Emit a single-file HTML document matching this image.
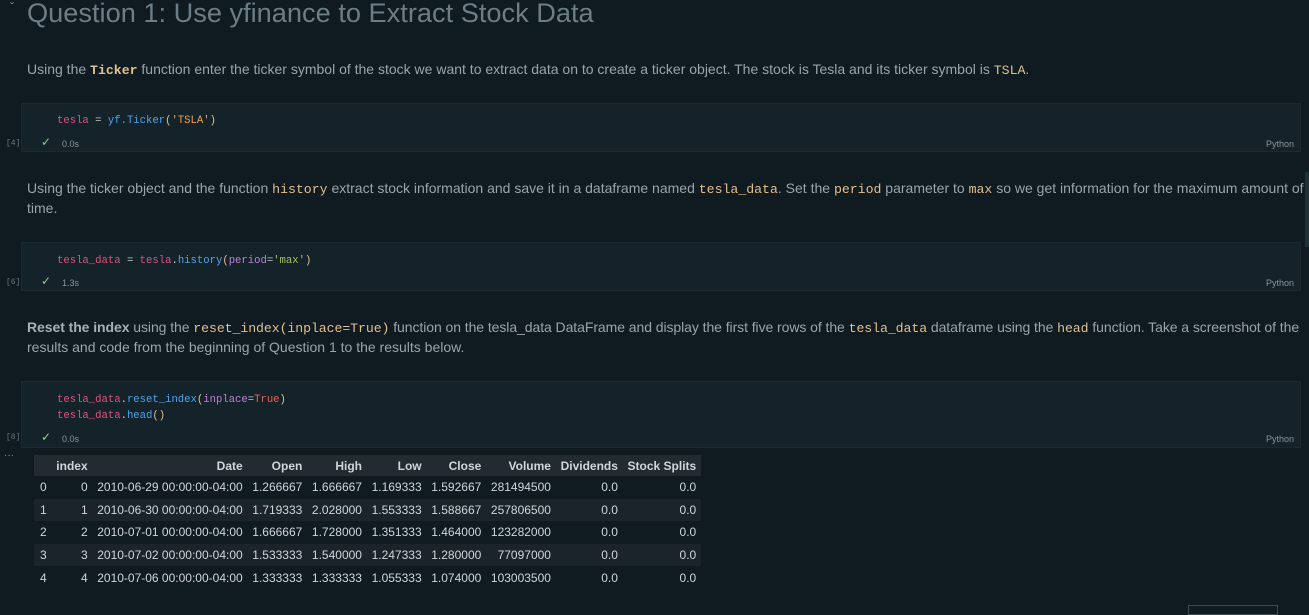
<!DOCTYPE html>
<html><head><meta charset="utf-8"><style>
*{margin:0;padding:0;box-sizing:border-box}
body{width:1309px;height:611px;background:#0f1a21;overflow:hidden;position:relative;font-family:"Liberation Sans",sans-serif;color:#9aa7ae}
.a{position:absolute;white-space:nowrap}
.md{font-size:14px;color:#98a5ac;left:27px}
.c{font-family:"Liberation Mono",monospace;color:#e2c08d;font-size:13.2px}
.cell{position:absolute;left:21px;width:1280px;background:#14222a;border:1px solid #1a2a32}
.code{font-family:"Liberation Mono",monospace;font-size:10.6px;position:absolute;left:35px}
.p{color:#e0527a}.b{color:#4fa3f0}.y{color:#e2c08d}.g{color:#a5c261}.o{color:#f0a050}.r{color:#f06050}.w{color:#c0c8cc}.v{color:#c27fd8}
.chk{position:absolute;left:19px;color:#89d185;font-size:12px}
.t{position:absolute;left:40px;font-size:9px;color:#8a959b}
.py{position:absolute;right:6px;font-size:9px;color:#8a959b}
.num{position:absolute;left:6px;font-size:8px;color:#6a767c;font-family:"Liberation Mono",monospace}
table{position:absolute;left:34px;top:455px;border-collapse:collapse;font-family:"Liberation Sans Narrow","Liberation Sans",sans-serif;font-size:12px;color:#d0d6d9}
th,td{text-align:right;padding:0 4.8px;height:22.6px;white-space:nowrap}
th{font-weight:bold;height:21px}
thead tr{background:#232b31}
tbody tr:nth-child(even){background:#1b242a}
td:first-child{text-align:left;padding-left:6px}
</style></head><body>
<div class="a" style="left:10px;top:0;font-size:12px;color:#8090a0">ˇ</div>
<div class="a" style="left:27px;top:-3px;font-size:27.2px;color:#6b7e88">Question 1: Use yfinance to Extract Stock Data</div>
<div class="a md" style="top:61px">Using the <b class="c">Ticker</b> function enter the ticker symbol of the stock we want to extract data on to create a ticker object. The stock is Tesla and its ticker symbol is <span class="c">TSLA</span>.</div>

<div class="cell" style="top:103px;height:49px">
<div class="code" style="top:11px"><span class="p">tesla</span> <span class="w">=</span> <span class="b">yf.Ticker</span><span class="y">(</span><span class="o">'TSLA'</span><span class="y">)</span></div>
<div class="chk" style="top:31px">✓</div><div class="t" style="top:35px">0.0s</div><div class="py" style="top:35px">Python</div>
</div>
<div class="num" style="top:139px">[4]</div>

<div class="a md" style="top:180px">Using the ticker object and the function <span class="c">history</span> extract stock information and save it in a dataframe named <span class="c">tesla_data</span>. Set the <span class="c">period</span> parameter to <span class="c">max</span> so we get information for the maximum amount of</div>
<div class="a md" style="top:200px">time.</div>
<div class="a" style="left:1305px;top:172px;width:4px;height:75px;background:#1e3038"></div>

<div class="cell" style="top:242px;height:49px">
<div class="code" style="top:12px"><span class="p">tesla_data</span> <span class="w">=</span> <span class="p">tesla</span><span class="w">.</span><span class="b">history</span><span class="y">(</span><span class="v">period</span><span class="w">=</span><span class="g">'max'</span><span class="y">)</span></div>
<div class="chk" style="top:31px">✓</div><div class="t" style="top:35px">1.3s</div><div class="py" style="top:35px">Python</div>
</div>
<div class="num" style="top:278px">[6]</div>

<div class="a md" style="top:319px;letter-spacing:-0.07px"><b style="color:#a5b0b6">Reset the index</b> using the <span class="c">reset_index(inplace=True)</span> function on the tesla_data DataFrame and display the first five rows of the <span class="c">tesla_data</span> dataframe using the <span class="c">head</span> function. Take a screenshot of the</div>
<div class="a md" style="top:339px">results and code from the beginning of Question 1 to the results below.</div>

<div class="cell" style="top:381px;height:67px">
<div class="code" style="top:12px"><span class="p">tesla_data</span><span class="w">.</span><span class="b">reset_index</span><span class="y">(</span><span class="v">inplace</span><span class="w">=</span><span class="r">True</span><span class="y">)</span></div>
<div class="code" style="top:28px"><span class="p">tesla_data</span><span class="w">.</span><span class="b">head</span><span class="y">()</span></div>
<div class="chk" style="top:48px">✓</div><div class="t" style="top:52px">0.0s</div><div class="py" style="top:52px">Python</div>
</div>
<div class="num" style="top:433px">[8]</div>
<div class="a" style="left:4px;top:450px;font-size:10px;color:#8090a0">···</div>

<table>
<thead><tr><th></th><th>index</th><th>Date</th><th>Open</th><th>High</th><th>Low</th><th>Close</th><th>Volume</th><th>Dividends</th><th>Stock Splits</th></tr></thead>
<tbody>
<tr><td>0</td><td>0</td><td>2010-06-29 00:00:00-04:00</td><td>1.266667</td><td>1.666667</td><td>1.169333</td><td>1.592667</td><td>281494500</td><td>0.0</td><td>0.0</td></tr>
<tr><td>1</td><td>1</td><td>2010-06-30 00:00:00-04:00</td><td>1.719333</td><td>2.028000</td><td>1.553333</td><td>1.588667</td><td>257806500</td><td>0.0</td><td>0.0</td></tr>
<tr><td>2</td><td>2</td><td>2010-07-01 00:00:00-04:00</td><td>1.666667</td><td>1.728000</td><td>1.351333</td><td>1.464000</td><td>123282000</td><td>0.0</td><td>0.0</td></tr>
<tr><td>3</td><td>3</td><td>2010-07-02 00:00:00-04:00</td><td>1.533333</td><td>1.540000</td><td>1.247333</td><td>1.280000</td><td>77097000</td><td>0.0</td><td>0.0</td></tr>
<tr><td>4</td><td>4</td><td>2010-07-06 00:00:00-04:00</td><td>1.333333</td><td>1.333333</td><td>1.055333</td><td>1.074000</td><td>103003500</td><td>0.0</td><td>0.0</td></tr>
</tbody></table>
<div class="a" style="left:1188px;top:605px;width:90px;height:10px;border:1px solid #3a4a52"></div>
</body></html>
